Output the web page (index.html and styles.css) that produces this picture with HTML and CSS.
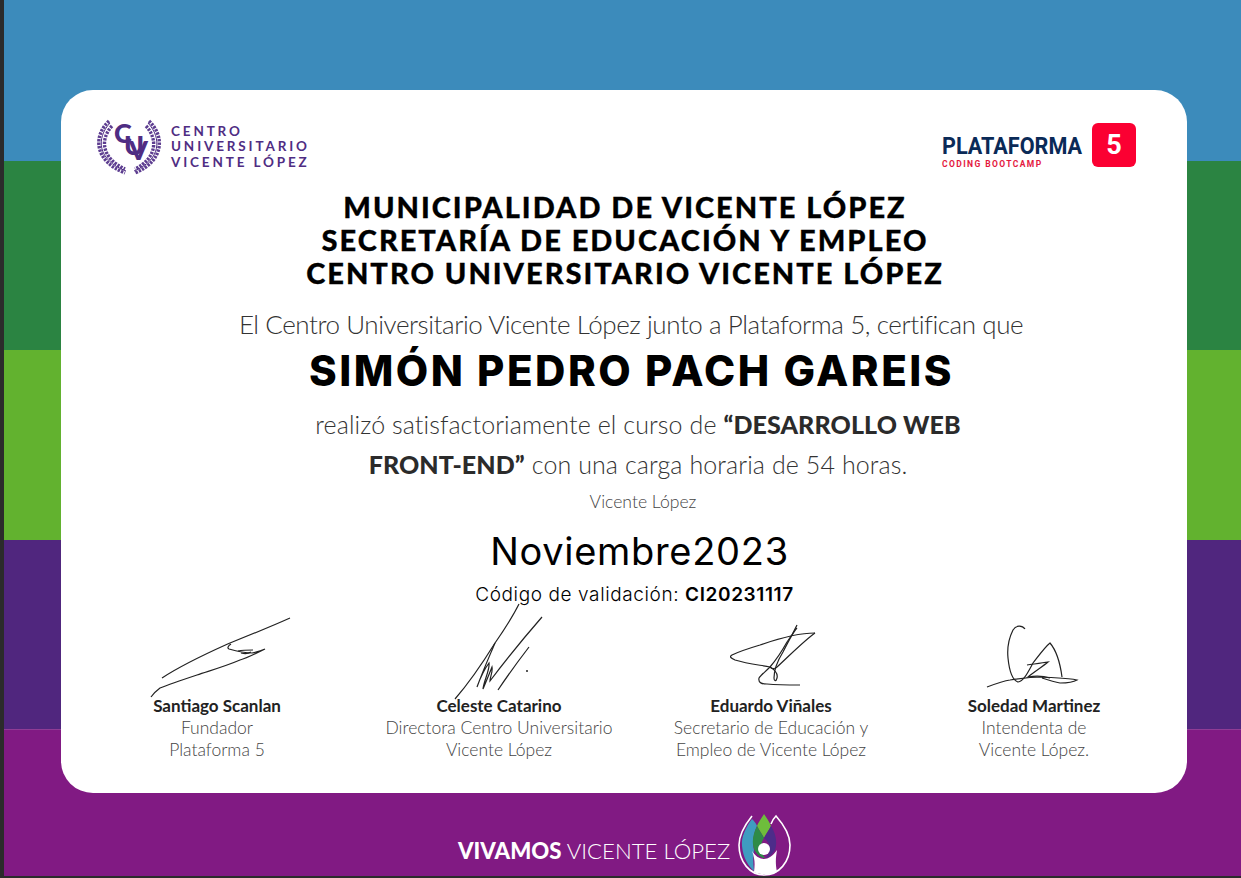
FILE: index.html
```html
<!DOCTYPE html>
<html lang="es">
<head>
    <meta charset="UTF-8">
    <meta name="viewport" content="width=device-width, initial-scale=1.0">
    <title>Certificado Desarrollo Web Front-End</title>
    <link rel="stylesheet" href="styles.css">
</head>
<body>
    <div class="sheet">
        <!-- Colour bands -->
        <div class="band band-blue"></div>
        <div class="band band-green"></div>
        <div class="band band-lime"></div>
        <div class="band band-purple"></div>
        <div class="band band-magenta"></div>

        <!-- Certificate card -->
        <div class="card">
            <div class="logos">
                <div class="cuvl">
                    <svg class="cuvl-mark" viewBox="0 0 72 56" aria-hidden="true">
                        <path class="wreath-leaf" d="M13 2C-3 17-2 42 29 54M53 2C69 17 68 42 39 54"/>
                        <path class="wreath-leaf" d="M16 7C4 20 5 39 29 50M50 7C62 20 61 39 39 50"/>
                        <path class="wreath-line" d="M14 4C0 19 1 41 30 52M52 4C66 19 65 41 38 52"/>
                        <text class="mono" x="18" y="24">C<tspan x="28" y="36">U</tspan><tspan x="33" y="41">V</tspan></text>
                    </svg>
                    <div class="cuvl-name">CENTRO<br>UNIVERSITARIO<br>VICENTE LÓPEZ</div>
                </div>
                <div class="p5">
                    <div class="p5-text">
                        <div class="p5-name">PLATAFORMA</div>
                        <div class="p5-sub">CODING BOOTCAMP</div>
                    </div>
                    <div class="p5-box">5</div>
                </div>
            </div>

            <h1 class="heading">MUNICIPALIDAD DE VICENTE LÓPEZ<br>SECRETARÍA DE EDUCACIÓN Y EMPLEO<br>CENTRO UNIVERSITARIO VICENTE LÓPEZ</h1>
            <p class="intro">El Centro Universitario Vicente López junto a Plataforma 5, certifican que</p>
            <div class="student">SIMÓN PEDRO PACH GAREIS</div>
            <p class="course">realizó satisfactoriamente el curso de <b>“DESARROLLO WEB<br>FRONT-END”</b> con una carga horaria de 54 horas.</p>
            <div class="place">Vicente López</div>
            <div class="date">Noviembre2023</div>
            <div class="code">Código de validación: <span>CI20231117</span></div>

            <div class="signs">
                <div class="sign">
                    <svg class="scrawl" viewBox="82 615 270 80" aria-hidden="true">
                        <path d="M162 678C185 663 210 652 230 643C250 635 270 627 290 618"/>
                        <path d="M231 644C228 646 227 648 229 649C236 651 244 653 252 653C257 652 261 651 265 649C255 654 247 658 240 660C226 666 212 670 197 675C182 680 170 684 160 688C156 691 153 694 151 697"/>
                        <path d="M238 651C243 650 248 650 253 650M241 653C245 654 248 654 251 652"/>
                    </svg>
                    <div class="sign-name">Santiago Scanlan</div>
                    <div class="sign-role">Fundador<br>Plataforma 5</div>
                </div>
                <div class="sign">
                    <svg class="scrawl" viewBox="352 615 294 80" aria-hidden="true">
                        <path d="M519 604C512 618 504 630 495 643C482 664 468 684 455 699"/>
                        <path d="M495 643C490 655 484 668 477 687C481 676 486 667 489 663C490 670 484 680 483 689C486 682 490 672 492 667C493 672 490 677 490 681C502 665 522 640 542 617"/>
                        <path d="M529 647C519 660 508 675 498 690"/>
                        <circle class="dot" cx="527" cy="671" r="1"/>
                    </svg>
                    <div class="sign-name">Celeste Catarino</div>
                    <div class="sign-role">Directora Centro Universitario<br>Vicente López</div>
                </div>
                <div class="sign">
                    <svg class="scrawl" viewBox="646 615 250 80" aria-hidden="true">
                        <path d="M797 625C794 632 791 637 787 642C782 651 776 660 770 667C765 672 761 675 759 678C758 683 762 684 767 684C778 685 790 685 800 685"/>
                        <path d="M815 633C800 633 780 638 760 645C750 648 740 651 732 655C729 657 731 658 735 660C748 664 760 665 770 667C775 670 778 674 777 678C776 682 774 681 774 678C774 670 778 660 783 652C788 642 793 632 797 628"/>
                        <path d="M815 633C805 640 790 655 777 667C775 669 772 669 770 667"/>
                    </svg>
                    <div class="sign-name">Eduardo Viñales</div>
                    <div class="sign-role">Secretario de Educación y<br>Empleo de Vicente López</div>
                </div>
                <div class="sign">
                    <svg class="scrawl" viewBox="896 615 276 80" aria-hidden="true">
                        <path d="M1025 629C1022 625 1016 625 1013 630C1009 638 1007 648 1008 658C1009 668 1012 680 1018 682C1024 681 1028 672 1033 663C1040 654 1045 647 1050 643C1056 650 1060 662 1062 677"/>
                        <path d="M1027 665C1034 664 1042 663 1048 662C1042 667 1034 672 1028 677C1034 676 1040 675 1050 678"/>
                        <path d="M987 687C995 684 1003 681 1010 680C1022 678 1033 677 1043 677C1055 678 1068 678 1077 680C1072 683 1066 683 1060 683C1054 682 1048 680 1042 678"/>
                    </svg>
                    <div class="sign-name">Soledad Martinez</div>
                    <div class="sign-role">Intendenta de<br>Vicente López.</div>
                </div>
            </div>
        </div>

        <!-- Footer logo over the magenta band -->
        <div class="vivamos">
            <span class="vivamos-text"><b>VIVAMOS</b> VICENTE LÓPEZ</span>
            <svg class="lotus" viewBox="0 0 53 64" aria-hidden="true">
                <path class="lotus-line" d="M14 4C6 14 1 24 1 33C1 50 12 63 26 63C41 63 52 50 52 33C52 24 46 13 38 4C36 6 34 9 33 12"/>
                <path class="lotus-blue" d="M14 7C8 15 3 25 4 34C5 46 11 55 16 59C15 50 15 43 16 38C14 30 16 20 19 14C18 11 16 9 14 7Z"/>
                <path class="lotus-green" d="M26 2C23 7 20 11 19 14C21 18 24 22 26 26C28 22 31 18 33 14C31 9 28 5 26 2Z"/>
                <path class="lotus-dark" d="M19 14C15 22 13 31 17 39C20 44 24 46 27 46C22 40 22 32 26 26C24 22 21 18 19 14Z"/>
                <path class="lotus-purple" d="M33 14C37 20 40 30 37 38C34 43 30 46 27 46C33 42 34 32 26 26C28 22 31 18 33 14Z"/>
                <path class="lotus-body" d="M14 39C17 44 22 47 26 47C30 47 35 44 39 38C38 45 37 50 39 60C33 63 22 63 16 60C17 52 17 47 14 39Z"/>
                <circle class="lotus-head" cx="26" cy="37" r="6"/>
            </svg>
        </div>
    </div>
</body>
</html>
```

FILE: styles.css
```css
* {
    box-sizing: border-box;
}
body {
    margin: 0;
    background: #2b2b2b;
    font-family: "Lato", sans-serif;
    overflow: hidden;
}
.sheet {
    position: relative;
    width: 1237px;
    height: 876px;
    margin-left: 4px;
    display: flex;
    flex-direction: column;
}
.band-blue {
    height: 161px;
    background: #3c8bbb;
}
.band-green {
    height: 189px;
    background: #2b8442;
}
.band-lime {
    height: 190px;
    background: #62b22f;
}
.band-purple {
    height: 189px;
    background: #50267e;
}
.band-magenta {
    height: 147px;
    background: #811a83;
    border-top: 1px solid #8f3c95;
}

/* Card */
.card {
    position: absolute;
    left: 57px;
    top: 90px;
    width: 1126px;
    height: 703px;
    background: #fff;
    border-radius: 32px;
    padding: 29px 21px 0;
    text-align: center;
    color: #000;
}
.logos {
    display: flex;
    justify-content: space-between;
    align-items: flex-start;
    height: 71px;
    padding: 0 30px 0 14px;
}
.cuvl {
    display: flex;
    align-items: center;
    gap: 3px;
    color: #4f2d83;
}
.cuvl-mark {
    width: 72px;
    height: 56px;
    overflow: visible;
}
.wreath-line {
    fill: none;
    stroke: #4f2d83;
    stroke-width: 1;
}
.wreath-leaf {
    fill: none;
    stroke: #5d3d90;
    stroke-width: 3.4;
    stroke-dasharray: 2.4 1.1;
}
.mono {
    fill: #4f2d83;
    font-family: "Lato", sans-serif;
    font-weight: 900;
    font-size: 27px;
}
.cuvl-name {
    text-align: left;
    font-size: 13.5px;
    font-weight: 700;
    line-height: 15.5px;
    letter-spacing: 2.85px;
}
.p5 {
    display: flex;
    align-items: flex-start;
    gap: 10px;
    margin-top: 4px;
}
.p5-text {
    width: 140px;
    text-align: left;
    padding-top: 11px;
    white-space: nowrap;
}
.p5-name {
    font-family: "Roboto", sans-serif;
    font-weight: 700;
    font-size: 24px;
    line-height: 24px;
    color: #0a2a57;
    transform: scaleX(0.9);
    transform-origin: left;
}
.p5-sub {
    margin-top: 1px;
    font-family: "Roboto", sans-serif;
    font-weight: 700;
    font-size: 8.5px;
    line-height: 11px;
    letter-spacing: 1.4px;
    color: #e4173e;
}
.p5-box {
    width: 44px;
    height: 44px;
    border-radius: 6px;
    background: #fb0032;
    color: #fff;
    font-family: "Roboto", sans-serif;
    font-weight: 700;
    font-size: 27px;
    line-height: 44px;
}

/* Main text */
.heading {
    margin: 0 0 0 2px;
    font-size: 29px;
    font-weight: 900;
    line-height: 33px;
    letter-spacing: 2px;
    -webkit-text-stroke: 0.3px #000;
}
.intro {
    margin: 19px 0 0 14px;
    font-size: 26px;
    font-weight: 300;
    line-height: 32px;
    letter-spacing: -0.43px;
    color: #333;
}
.student {
    margin: 3px 0 0 15px;
    font-family: "Inter", sans-serif;
    font-size: 42px;
    font-weight: 800;
    line-height: 56px;
    letter-spacing: 2.5px;
}
.course {
    margin: 5px 0 0 28px;
    font-size: 25px;
    font-weight: 300;
    line-height: 40px;
    letter-spacing: 0.1px;
    color: #333;
}
.course b {
    font-weight: 900;
    color: #2b2b2b;
}
.place {
    margin: 6px 0 0 38px;
    font-size: 17.6px;
    font-weight: 300;
    line-height: 24px;
    color: #444;
}
.date {
    margin: 14px 0 0 31px;
    font-family: "Inter", sans-serif;
    font-size: 38px;
    font-weight: 400;
    line-height: 46px;
    letter-spacing: 0.7px;
}
.code {
    margin: 9px 0 0 21px;
    font-family: "Inter", sans-serif;
    font-size: 19px;
    font-weight: 300;
    line-height: 24px;
    letter-spacing: 0.6px;
}
.code span {
    font-weight: 600;
}

/* Signatures */
.signs {
    display: grid;
    grid-template-columns: 270px 294px 250px 276px;
    margin-top: 8px;
}
.sign {
    min-width: 0;
}
.scrawl {
    display: block;
    width: 100%;
    height: 80px;
    overflow: visible;
}
.scrawl path {
    fill: none;
    stroke: #222;
    stroke-width: 1.2;
}
.scrawl .dot {
    fill: #222;
}
.sign-name {
    font-size: 17px;
    font-weight: 700;
    line-height: 22px;
    color: #222;
}
.sign-role {
    font-size: 17.5px;
    font-weight: 300;
    line-height: 22px;
    color: #444;
}

/* Footer logo */
.vivamos {
    position: absolute;
    left: 454px;
    top: 812px;
    display: flex;
    align-items: flex-start;
    gap: 8px;
}
.vivamos-text {
    margin-top: 27px;
    font-size: 22.2px;
    font-weight: 300;
    line-height: 24px;
    color: #fff;
    white-space: nowrap;
}
.vivamos-text b {
    font-weight: 900;
}
.lotus {
    width: 53px;
    height: 64px;
}
.lotus-line {
    fill: none;
    stroke: #fff;
    stroke-width: 1.6;
}
.lotus-blue {
    fill: #3f9cc0;
}
.lotus-green {
    fill: #6ebd3c;
}
.lotus-dark {
    fill: #2e8b47;
}
.lotus-purple {
    fill: #4d2c8a;
}
.lotus-body {
    fill: #fff;
}
.lotus-head {
    fill: #fff;
}
```
